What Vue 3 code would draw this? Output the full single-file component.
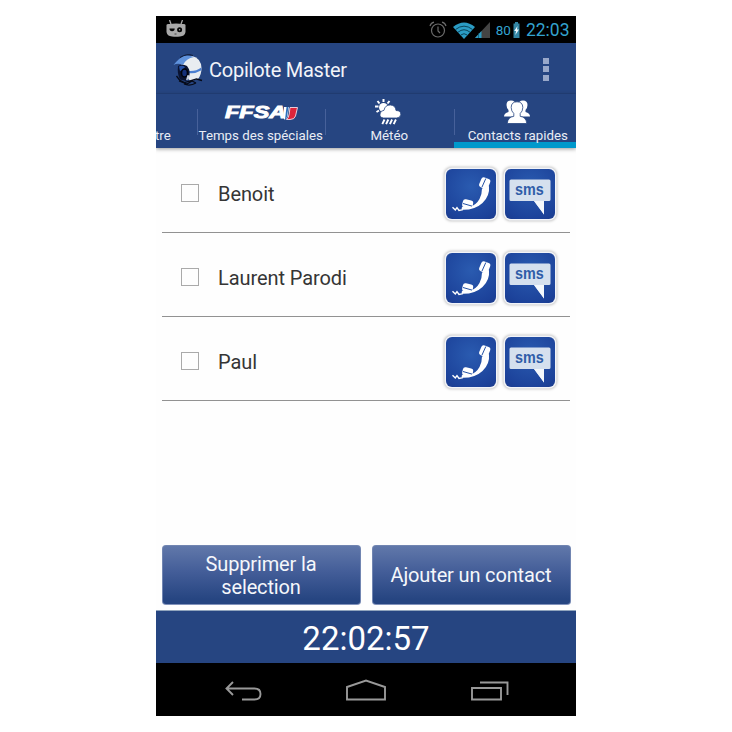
<script setup>
const contacts = ['Benoit', 'Laurent Parodi', 'Paul']
</script>

<template>
  <main class="phone">
    <header class="status">
      <svg class="cid" width="20" height="18" viewBox="0 0 20 18">
        <path d="M3.500 0l1.500 4M16.500 0L15 4" stroke="#a9a9a9" stroke-width="1.300" fill="none" />
        <path d="M.5 5Q.5 3.800 3 3.900Q10 3.200 17 3.900Q19.500 3.800 19.500 5V12Q19 16 14 16.500Q10 17 6 16.500Q1 16 .5 12Z" fill="#a9a9a9" />
        <path d="M3.500 8.600h5.200q0 2.600-2.600 2.600t-2.600-2.600z" fill="#050505" />
        <circle cx="13.600" cy="9.700" r="2.500" fill="#050505" />
        <circle cx="13.600" cy="9.700" r=".7" fill="#a9a9a9" />
        <path d="M8.500 14h2" stroke="#444" />
      </svg>
      <div class="indicators">
        <svg class="alarm" width="18" height="18" viewBox="0 0 18 18" fill="none" stroke="#6c6c6c" stroke-width="1.200">
          <circle cx="9" cy="9.500" r="6.500" />
          <path d="M9 5.500v4.500l2 2M1 5Q1.800 2 5 1.200M13 1.200Q16.200 2 17 5" />
        </svg>
        <svg class="wifi" width="22" height="17" viewBox="0 0 22 17">
          <path d="M0 5Q11-4 22 5L11 17Z" fill="#2b9cc4" />
          <path d="M2.500 7.500Q11 .8 19.500 7.500M5 10.200Q11 5.300 17 10.200M7.800 13Q11 10.400 14.200 13" fill="none" stroke="#0b4459" stroke-width="1" />
        </svg>
        <svg class="signal" width="15" height="16" viewBox="0 0 15 16">
          <path d="M15 0V16H0Z" fill="#444" />
          <path d="M6.500 9V16H0Z" fill="#2b9cc4" />
          <path d="M3.500 11v5" stroke="#0b4459" stroke-width=".6" />
        </svg>
        <span class="percent">80</span>
        <svg class="battery" width="7" height="16" viewBox="0 0 7 16">
          <path d="M2 0h3v1.500h1.500V16H.5V1.500H2z" fill="#3487a5" />
          <path d="M4.500 4L1.200 9h1.900L2.300 13 6 7.500H4z" fill="#eefaff" />
        </svg>
        <span class="time">22:03</span>
      </div>
    </header>

    <div class="actionbar">
      <svg class="helmet" width="32" height="34" viewBox="0 0 32 34">
        <path d="M10 6Q14 2.500 19 3Q28 5 28.500 15Q28.500 22 25 26L17 28L8 14Z" fill="#e9edf1" />
        <path d="M.5 12Q6 5 11 3Q16 1.500 21 4Q13 5.500 10 12Q5 9.500 .5 12Z" fill="#5f92dc" />
        <path d="M7 4.500Q14 0 20 2.500" fill="none" stroke="#111c38" stroke-width="1" />
        <path d="M16 18Q23 18.500 28.300 14.500L28 17.500Q22 21 16 20z" fill="#4b7fd0" />
        <path d="M5 13Q9 10.500 14 13Q18 18 16 24L13 28L7 26.500Q4 21 5 13Z" fill="#0a1331" />
        <path d="M6 13.500q3-1.500 6 .5l-2 3-3 1z" fill="#2450a8" />
        <ellipse cx="11.500" cy="20" rx="3" ry="4" fill="#142f78" stroke="#01030c" stroke-width="1.600" />
        <path d="M14.500 22l2 .5-1 4-2.500.5z" fill="#c8d0df" />
        <path d="M3.500 23l3 4 5 2.500 12-3.500 5.500 1.500M6 28l8 3 5-3 4 2M11 31q6 2.500 12-1" fill="none" stroke="#060a18" stroke-width="1.300" />
      </svg>
      <h1>Copilote Master</h1>
      <div class="overflow"><i></i><i></i><i></i></div>
    </div>

    <nav class="tabs">
      <div class="tab previous"><span>tre</span></div>
      <div class="tab">
        <div class="ffsa">
          <b>FFSA</b>
          <svg width="14" height="13" viewBox="0 0 14 13">
            <path d="M0 0h5L3.500 9.500Q3 12 0 12.500z" fill="#fff" />
            <path d="M2.500 0h2L3 9.500Q2.500 12 1 12.500z" fill="#2a70bd" />
            <path d="M6 .5h7.500L11.500 9Q10.500 12.500 6 12.500H2.500Q4.800 11 5.200 7z" fill="#dc253b" stroke="#f4dce6" stroke-width=".9" />
          </svg>
        </div>
        <span>Temps des spéciales</span>
      </div>
      <div class="tab">
        <svg width="28" height="28" viewBox="0 0 28 28">
          <path d="M9.500 1v3M3.500 3l2 2.500M15.500 3l-2 2.500M1 8.500h3.500M2.500 14l2.500-1.500" stroke="#fff" stroke-width="2" />
          <circle cx="9.500" cy="9.500" r="4.500" fill="#fff" />
          <path d="M9.500 20Q5.500 19.500 6 16Q6.500 12.500 10 12.300Q11 6.800 16.500 7Q21.500 7.300 22 12.500Q27 12.500 26.800 16.500Q26.300 20 22.500 20Z" fill="#fff" stroke="#264580" stroke-width=".8" />
          <path d="M10.500 21.500l-2.200 4.700M14.300 21.500l-2.200 4.700M18.100 21.500l-2.200 4.700M21.900 21.500l-2.200 4.700" stroke="#fff" stroke-width="1.900" />
        </svg>
        <span>Météo</span>
      </div>
      <div class="tab active">
        <svg width="28" height="28" viewBox="0 0 28 28" fill="#fff">
          <path d="M3.500 7Q3.500 2.500 8 2.500t5 4.500q0 3-2 5.500v3l1 3H1Q1 15 5.500 14v-2Q3.500 10 3.500 7z" />
          <path d="M24.500 7Q24.500 2.500 20 2.500t-5 4.500q0 3 2 5.500v3l-1 3h11Q27 15 22.500 14v-2q2-2 2-5z" />
          <path d="M8.200 9.500Q8.200 3.800 14 3.800t5.800 5.700q0 3.800-2.600 6v2.800q6 .9 6.600 7.200H4.200q.6-6.300 6.600-7.200v-2.800q-2.600-2.200-2.600-6z" stroke="#264580" stroke-width=".8" />
        </svg>
        <span>Contacts rapides</span>
      </div>
    </nav>

    <ul class="contacts">
      <li v-for="name in contacts" :key="name">
        <span class="check"></span>
        <span class="name">{{ name }}</span>
        <div class="tile">
          <svg width="50" height="50" viewBox="0 0 50 50">
            <path d="M36 19.500L43 17Q44 27 36.500 34Q29 41 16.500 40.800Q14.500 39 17 37.200L24 38Q30.500 35.500 33.500 30Q36 25.500 36 19.500Z" fill="#fff" />
            <rect x="34" y="8.800" width="9.500" height="10.500" rx="2.600" transform="rotate(22 38.500 14)" fill="#fff" />
            <rect x="16.500" y="30.800" width="10.500" height="8" rx="2.600" transform="rotate(14 21.500 34.500)" fill="#fff" />
            <path d="M36 18l3.800-8.500M17 34.500l9 2.600" stroke="#2451a4" stroke-width="1" />
            <path d="M6.500 38.300l2.800 2.700 1.700-2.400 2 2.800 4-.8" fill="none" stroke="#fff" stroke-width="1.400" />
          </svg>
        </div>
        <div class="tile sms">
          <svg width="50" height="50" viewBox="0 0 50 50">
            <path d="M6 10.500h38q1.500 0 1.500 1.500v18.500q0 1.500-1.500 1.500H39v13.500L29 32H6q-1.500 0-1.500-1.500V12q0-1.500 1.500-1.500z" fill="#d5e0ee" />
            <path d="M29 32h10v13.500z" fill="#f4f8fc" />
          </svg>
          <b>sms</b>
        </div>
      </li>
    </ul>

    <div class="buttons">
      <button>Supprimer la<br>selection</button>
      <button>Ajouter un contact</button>
    </div>
    <div class="clock">22:02:57</div>
    <footer class="navbar">
      <svg width="420" height="53" viewBox="0 0 420 53" fill="none" stroke="#999" stroke-width="1.900">
        <path d="M77 19l-6.500 6.500L77 32M70.500 25.500H98.500q6 0 6 5.500t-6 5.500H86" />
        <path d="M191 36.500V24l19-6.500L229 24v12.500z" />
        <path d="M316 25h29v11.500h-29zM324 19.500h27.500V32" />
      </svg>
    </footer>
  </main>
</template>

<style>
body { margin: 0; background: #fff; }
</style>

<style scoped>
* { box-sizing: border-box; }
.phone { width: 420px; height: 700px; margin: 16px auto; display: flex; flex-direction: column; font-family: Roboto, sans-serif; background: #fefefe; overflow: hidden; }
svg { display: block; flex: none; }
.status { height: 27px; flex: none; background: #000; display: flex; justify-content: space-between; padding: 0 6.500px 0 9.500px; color: #33a3cf; }
.cid { margin-top: 4px; }
.indicators { display: flex; align-items: center; padding-top: 1px; }
.wifi { margin-left: 6px; }
.signal { margin-left: 0; }
.percent { font-size: 13.500px; margin-left: 6px; line-height: 27px; }
.battery { margin-left: 2px; }
.time { font-size: 17.500px; margin-left: 6px; line-height: 27px; }
.actionbar { height: 51px; flex: none; background: #264581; display: flex; align-items: center; padding: 3px 27px 0 17px; color: #f2f4f9; border-bottom: 1px solid #24427c; }
h1 { margin: 0 auto 0 4px; padding-top: 1px; font-size: 20px; letter-spacing: -.24px; font-weight: 400; line-height: 24px; }
.overflow { display: flex; flex-direction: column; gap: 2.500px; padding-bottom: 1px; }
.overflow i { width: 6px; height: 6px; background: #99a8c9; }
.tabs { height: 54px; flex: none; background: #264581; display: grid; grid-template-columns: 40.500px 128.500px 128.500px 128.500px; box-shadow: 0 1px 4px rgba(0, 0, 0, .4); z-index: 1; }
.tab { display: flex; flex-direction: column; align-items: center; height: 54px; padding-top: 4px; color: #e9edf5; font-size: 13.300px; line-height: 19px; white-space: nowrap; background: linear-gradient(#47619a, #47619a) 0 15px / 1px 26px no-repeat; }
.tab > svg { margin-left: -2px; }
.previous { background: none; align-items: flex-start; padding-top: 32px; margin-left: -1px; }
.active { border-bottom: 6px solid #0099cc; }
.ffsa { height: 28px; width: 74px; display: flex; align-items: center; padding: 2px 0 0 1px; }
.ffsa b { width: 60px; font: italic bold 17px/20px "Liberation Sans", sans-serif; color: #fff; -webkit-text-stroke: .9px #fff; transform: scaleX(1.38); transform-origin: 0 50%; }
.ffsa svg { z-index: 1; }
.contacts { margin: 0; padding: 1px 6px 0; list-style: none; flex: 1; }
li { height: 84px; display: flex; align-items: center; padding: 7px 15px 0 19px; border-bottom: 1px solid #929292; }
.check { width: 18px; height: 18px; border: 1px solid #aaa; margin-bottom: 2px; }
.name { margin-right: auto; padding-left: 19px; font-size: 20px; letter-spacing: -.08px; color: #353535; margin-bottom: 0; }
.tile { width: 50px; height: 50px; border-radius: 6px; background: radial-gradient(circle at 50% 35%, #2a5bb0, #1c429a 80%, #1b3b8d); box-shadow: 0 0 0 1.500px #f1f3f8, 0 0 3px 1.500px #bbb; display: grid; }
.tile svg, .tile b { grid-area: 1 / 1; }
.sms { margin-left: 9px; }
.sms b { z-index: 1; text-align: center; font: bold 16.500px/20px "Liberation Sans", sans-serif; color: #2f5da8; padding-top: 10px; transform: scaleX(.87); transform-origin: 40% 50%; }
.buttons { height: 71px; flex: none; display: grid; grid-template-columns: 1fr 1fr; gap: 11px; padding: 5.500px 5.500px; }
button { border: 1px solid #7185b1; border-bottom-color: #8192bb; border-radius: 4px; background: linear-gradient(#6178aa, #435d98 45%, #264581 92%); color: #f5f7fb; font: 20px/23px Roboto, sans-serif; letter-spacing: -.15px; padding: 2px 0 0; }
.clock { height: 53px; flex: none; background: #264581; border-top: 1px solid #91a5bd; color: #fff; font-size: 33px; line-height: 55px; text-align: center; }
.navbar { height: 53px; flex: none; background: #000; }
</style>
